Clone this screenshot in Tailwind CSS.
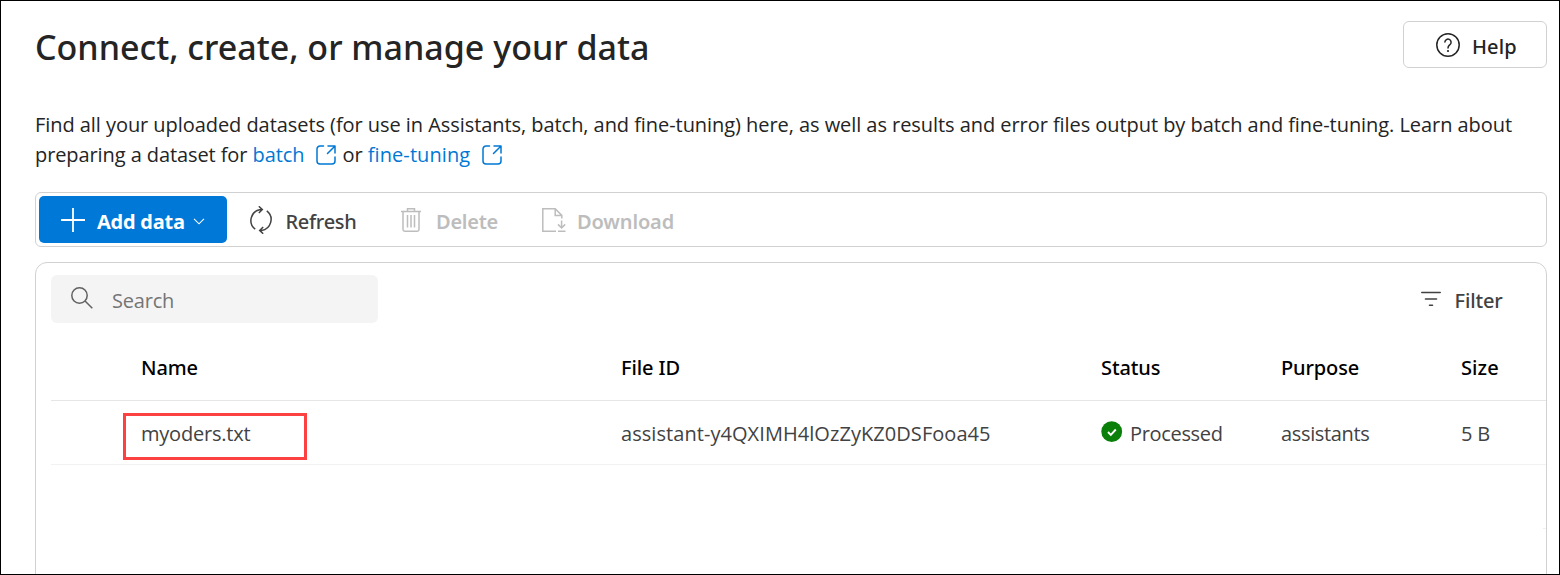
<!DOCTYPE html>
<html lang="en">
<head>
<meta charset="utf-8">
<title>Data files</title>
<script src="https://cdn.jsdelivr.net/npm/@tailwindcss/browser@4"></script>
</head>
<body class="bg-white">
<div class="flex h-[575px] w-[1560px] flex-col overflow-hidden border border-black bg-white pl-[34px] pr-3 pt-5 font-['Open_Sans',sans-serif] text-[20px] leading-[30px] text-[#242424]">
  <header class="flex h-12 items-start justify-between">
    <h1 class="pt-[5px] font-['Noto_Sans',sans-serif] text-[34px] leading-[42px] font-medium whitespace-nowrap">Connect, create, or manage your data</h1>
    <button class="flex h-[47px] w-36 items-center rounded-md border border-[#d1d1d1] pl-8">
      <svg class="size-6 shrink-0" viewBox="0 0 24 24" fill="none" stroke="#242424" stroke-width="1.5"><circle cx="12" cy="12" r="11.2"/><path d="M8.9 9a3.1 3.1 0 1 1 5.2 2.5c-1.1 1-2.1 1.5-2.1 3.4" stroke-linecap="round"/><circle cx="12" cy="18" r="1.1" fill="#242424" stroke="none"/></svg>
      <span class="ml-3 pt-[5px] font-['Noto_Sans',sans-serif] font-medium tracking-[0.15px]">Help</span>
    </button>
  </header>
  <p class="mt-[42px] h-[60px] whitespace-nowrap tracking-[-0.058px]">Find all your uploaded datasets (for use in Assistants, batch, and fine-tuning) here, as well as results and error files output by batch and fine-tuning. Learn about<br><span class="tracking-[-0.09px]">preparing a dataset for </span><a class="text-[#0078d4]">batch<svg class="mr-[7px] ml-[11px] -mt-1 inline-block h-5 w-5 align-middle" viewBox="0 0 20 20" fill="none" stroke="currentColor" stroke-width="1.5" stroke-linecap="round" stroke-linejoin="round"><path d="M7.5 1H4a3 3 0 0 0-3 3v12a3 3 0 0 0 3 3h12a3 3 0 0 0 3-3v-4M12 1h7v7M18.8 1.2 11.5 8.5"/></svg></a>or <a class="text-[#0078d4]"><span class="tracking-[0.08px]">fine-tuning</span><svg class="ml-3 -mt-1 inline-block h-5 w-5 align-middle" viewBox="0 0 20 20" fill="none" stroke="currentColor" stroke-width="1.5" stroke-linecap="round" stroke-linejoin="round"><path d="M7.5 1H4a3 3 0 0 0-3 3v12a3 3 0 0 0 3 3h12a3 3 0 0 0 3-3v-4M12 1h7v7M18.8 1.2 11.5 8.5"/></svg></a></p>

  <div class="mt-[22px] flex h-[55px] shrink-0 items-center rounded-md border border-[#d1d1d1] pl-[3px] font-['Noto_Sans',sans-serif] font-medium whitespace-nowrap text-[#424242]">
    <button class="flex h-[47px] w-[188px] items-center rounded-[5px] bg-[#0078d7] pl-[21px] text-white">
      <svg class="size-[26px] shrink-0" viewBox="0 0 26 26" fill="none" stroke="currentColor" stroke-width="1.8"><path d="M13 1v24M1 13h24"/></svg>
      <span class="ml-[11px] w-[87px] pt-[5px] font-['Open_Sans',sans-serif] font-bold tracking-[-0.25px]">Add data</span>
      <svg class="mt-1 ml-[9px] h-[7px] w-3 shrink-0" viewBox="0 0 12 7" fill="none" stroke="currentColor" stroke-width="1.1"><path d="m1 .8 5 5 5-5"/></svg>
    </button>
    <button class="flex items-center pl-[22px]">
      <svg class="h-[28px] w-6 shrink-0" viewBox="0 0 24 28" fill="none" stroke="currentColor" stroke-width="1.5"><path d="M6.2 23.2A11 11 0 0 1 11.5 3.6H13M17.8 4.8A11 11 0 0 1 12.5 24.4H11M9.8.3l3.5 3.3-3.5 3.4M14.2 21l-3.5 3.4 3.5 3.3"/></svg>
      <span class="ml-3 w-[72px] pt-[5px] tracking-[-0.27px]">Refresh</span>
    </button>
    <button class="flex items-center pl-11 text-[#bdbdbd]">
      <svg class="h-6 w-5 shrink-0" viewBox="0 0 20 24" fill="none" stroke="currentColor" stroke-width="1.5"><path d="M0 3.5h20M6.5 3V.8h7V3M2 3.5v18q0 1.7 1.7 1.7h12.6q1.7 0 1.7-1.7v-18M6.5 7v12.5M10 7v12.5M13.5 7v12.5"/></svg>
      <span class="ml-[15px] w-[62px] pt-[5px] font-semibold tracking-[-0.25px]">Delete</span>
    </button>
    <button class="flex items-center pl-11 text-[#bdbdbd]">
      <svg class="h-6 w-6 shrink-0" viewBox="0 0 24 24" fill="none" stroke="currentColor" stroke-width="1.5"><path d="M14 23.2H.8V.8h12.4l6.6 6.6v3.2M13.2.8v6.6h6.6M19.6 12.5v7.2M16 16.4l3.6 3.6 3.6-3.6M16 23.2h7.5"/></svg>
      <span class="ml-[11px] pt-[5px] font-semibold tracking-[-0.14px]">Download</span>
    </button>
  </div>

  <main class="mt-[15px] h-[330px] shrink-0 rounded-t-xl border border-[#d1d1d1] pt-3 pl-[15px]">
    <div class="flex h-12 items-center justify-between pr-[43px]">
      <div class="flex h-12 w-[327px] items-center rounded-md bg-[#f4f4f4] pl-5 text-[#757575]">
        <svg class="-mt-[3px] h-[22px] w-[22px] shrink-0" viewBox="0 0 22 22" fill="none" stroke="#616161" stroke-width="1.5"><circle cx="8.5" cy="8.5" r="7.7"/><path d="m14 14 7.3 7.3"/></svg>
        <span class="ml-[19px] pt-[3px] tracking-[-0.2px]">Search</span>
      </div>
      <button class="flex items-center font-['Noto_Sans',sans-serif] font-medium text-[#424242]">
        <svg class="-mt-px h-[16px] w-5 shrink-0" viewBox="0 0 20 16" fill="none" stroke="currentColor" stroke-width="1.6" stroke-linecap="round"><path d="M.8 1.5h18.4M4.5 8h11M8.5 14.3h3"/></svg>
        <span class="ml-[13px] w-[49px] pt-[3px] tracking-[-0.15px]">Filter</span>
      </button>
    </div>
    <div class="mt-[10px] grid h-[68px] grid-cols-[480px_480px_180px_180px_1fr] items-center border-b border-[#e6e6e6] pt-0.5 pl-[90px] font-['Noto_Sans',sans-serif] font-medium tracking-[-0.12px] text-black">
      <span>Name</span><span>File ID</span><span>Status</span><span>Purpose</span><span class="tracking-[0.1px]">Size</span>
    </div>
    <div class="relative grid h-16 grid-cols-[480px_480px_180px_180px_1fr] items-center border-b border-[#f2f2f2] pl-[90px] pt-0.5 text-[#424242]">
      <span class="tracking-[-0.22px]">myoders.txt</span>
      <span class="tracking-[0.06px]">assistant-y4QXIMH4lOzZyKZ0DSFooa45</span>
      <span class="flex items-center tracking-[-0.33px]"><svg class="-mt-1 mr-[7px] size-[22px] shrink-0" viewBox="0 0 22 22"><circle cx="10.7" cy="10.7" r="10.4" fill="#0a800a"/><path d="m7 11 2.8 2.8 5-5.3" fill="none" stroke="#fff" stroke-width="1.9"/></svg>Processed</span>
      <span class="tracking-[-0.35px]">assistants</span><span class="tracking-[-0.2px]">5 B</span>
      <div class="absolute top-3 left-[72px] h-[47px] w-[184px] border-3 border-[#fb4141]"></div>
    </div>
    <div class="mt-[63px] ml-auto h-px w-[3px] bg-[#f0f0f0]"></div>
  </main>
</div>
</body>
</html>
